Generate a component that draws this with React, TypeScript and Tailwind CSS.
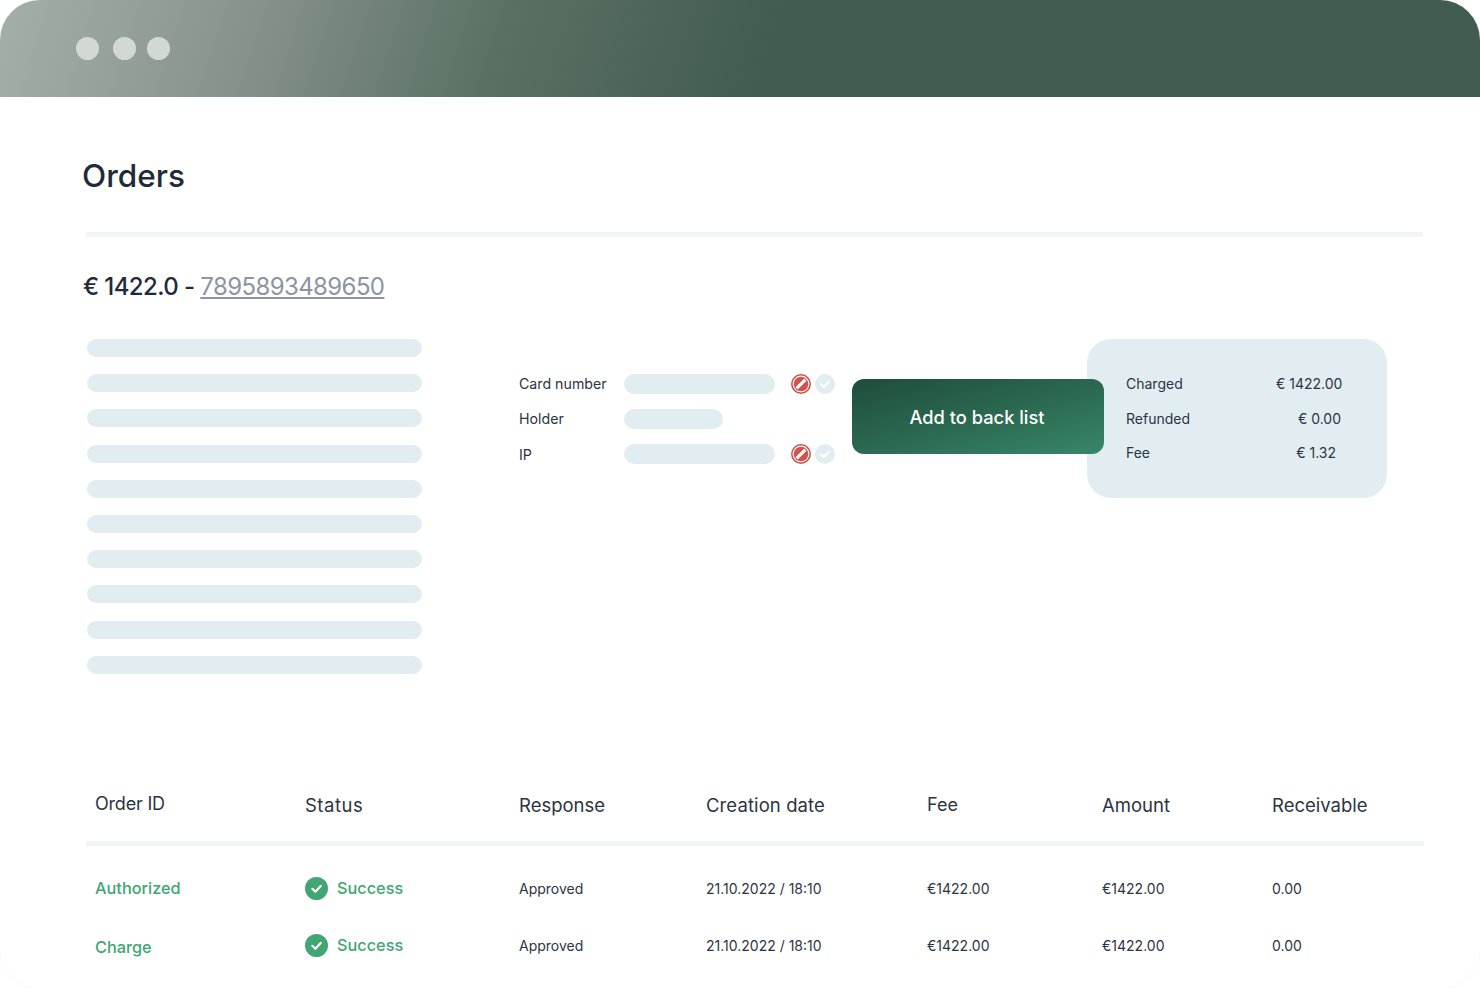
const font = "font-['Inter','Noto_Sans',sans-serif]"

const skeletonRows = [0, 1, 2, 3, 4, 5, 6, 7, 8, 9]

const totals: [string, string, string][] = [
  ['Charged', '€ 1422.00', 'pr-0'],
  ['Refunded', '€ 0.00', 'pr-0'],
  ['Fee', '€ 1.32', 'pr-[5px]'],
]

const orders = [
  { id: 'Authorized', offset: 'translate-y-0' },
  { id: 'Charge', offset: 'translate-y-[2px]' },
]

function BlockIcon() {
  return (
    <svg width="20" height="20" viewBox="0 0 20 20" fill="none">
      <circle cx="10" cy="10" r="9.2" fill="#fff" stroke="#cf4c46" strokeWidth="1.5" />
      <circle cx="10" cy="10" r="7.3" fill="#d0534c" />
      <path d="M5.6 14.4 14.4 5.6" stroke="#fff" strokeWidth="3.2" />
    </svg>
  )
}

function OkIcon() {
  return (
    <svg width="20" height="20" viewBox="0 0 20 20" fill="none">
      <circle cx="10" cy="10" r="10" fill="#e2edf2" />
      <path d="m6 10.4 2.7 2.6L14 7.6" stroke="#fff" strokeWidth="2" strokeLinecap="round" strokeLinejoin="round" />
    </svg>
  )
}

function SuccessIcon() {
  return (
    <svg width="23" height="23" viewBox="0 0 23 23" fill="none">
      <circle cx="11.5" cy="11.5" r="11.5" fill="#41a673" />
      <path d="m7.4 11.8 2.9 2.9 5.4-5.8" stroke="#fff" strokeWidth="2.2" strokeLinecap="round" strokeLinejoin="round" />
    </svg>
  )
}

function CheckRow({ label, bar, icons, labelClass }: { label: string; bar: string; icons?: boolean; labelClass?: string }) {
  return (
    <div className="flex h-5 items-center">
      <span className={`w-[105px] text-[14.2px] text-[#2b3442] ${labelClass ?? ''}`}>{label}</span>
      <div className={`h-5 rounded-full bg-[#e2edf2] ${bar}`} />
      {icons && (
        <div className="ml-4 flex gap-1">
          <BlockIcon />
          <OkIcon />
        </div>
      )}
    </div>
  )
}

export default function App() {
  return (
    <div className={`h-[988px] w-[1480px] overflow-hidden rounded-[40px] bg-white shadow-[0_0_0_1px_#fafafa] ${font}`}>
      <div className="flex h-[97px] items-center gap-[11px] bg-[linear-gradient(108deg,#a5afa9_0%,#849189_18%,#5b7063_34%,#425c50_52%,#425c50_100%)] pl-[76px]">
        <span className="size-[23px] rounded-full bg-[#d3d8d5]" />
        <span className="ml-[3px] size-[23px] rounded-full bg-[#d3d8d5]" />
        <span className="size-[23px] rounded-full bg-[#d3d8d5]" />
      </div>

      <div className="pl-[86px] pr-[57px]">
        <h1 className="-ml-[4px] mt-[59px] text-[31.5px] leading-[40px] font-[450] text-[#1f2a3a]">Orders</h1>
        <div className="mt-[36px] h-[5px] bg-[#f3f4f4]" />

        <p className="-ml-[3px] mt-[33px] text-[24px] leading-[34px] font-[550] tracking-[-0.6px] text-[#1f2a3a]">
          € 1422.0 - <span className="font-normal text-[#8b95a3] underline underline-offset-2">7895893489650</span>
        </p>

        <div className="mt-[35px] flex items-start">
          <div className="ml-px flex w-[335px] flex-col gap-[17.2px]">
            {skeletonRows.map((n) => (
              <div key={n} className="h-[18px] rounded-full bg-[#e2edf2]" />
            ))}
          </div>

          <div className="ml-[97px] mt-[35px] flex flex-col gap-[15px]">
            <CheckRow label="Card number" bar="w-[151px]" icons />
            <CheckRow label="Holder" bar="w-[99px]" />
            <CheckRow label="IP" bar="w-[151px]" icons labelClass="mt-[2px]" />
          </div>

          <button className="relative z-10 ml-[17px] mt-[40px] h-[75px] w-[252px] rounded-[12px] bg-[linear-gradient(165deg,#1f4d3b_0%,#2b6850_50%,#378768_100%)] pr-[2px] pt-[3px] text-[18.3px] font-medium text-white">
            Add to back list
          </button>

          <div className="-ml-[17px] flex h-[159px] w-[300px] flex-col gap-[14.5px] rounded-[24px] bg-[#e2edf2] pl-[39px] pt-[34.5px]">
            {totals.map(([label, value, pad]) => (
              <div key={label} className="flex h-5 items-center text-[14px] text-[#2b3442]">
                <span className="w-[150px]">{label}</span>
                <span className={`w-[65px] whitespace-nowrap text-right ${pad}`}>{value}</span>
              </div>
            ))}
          </div>
        </div>

        <div className="mt-[119.2px] grid grid-cols-[210px_214px_187px_221px_175px_170px_1fr] pl-[9px] text-[18.5px] leading-6 text-[#2b3442]">
          <span className="-mt-[1px] text-[18px] tracking-[-0.2px]">Order ID</span>
          <span className="tracking-[0.5px]">Status</span>
          <span>Response</span>
          <span className="tracking-[0.1px]">Creation date</span>
          <span className="text-[18px]">Fee</span>
          <span>Amount</span>
          <span>Receivable</span>
        </div>
        <div className="mr-[-1px] mt-[24px] h-[5px] bg-[#f3f4f4]" />

        <div className="mt-[30px] flex flex-col gap-[33px]">
          {orders.map((o) => (
            <div key={o.id} className="grid h-6 grid-cols-[210px_214px_187px_221px_175px_170px_1fr] items-center pl-[9px] text-[14px] text-[#2b3442]">
              <span className={`text-[16.3px] font-medium text-[#41a673] ${o.offset}`}>{o.id}</span>
              <span className="flex items-center gap-[9px] text-[16.3px] font-medium text-[#41a673]">
                <SuccessIcon />
                Success
              </span>
              <span>Approved</span>
              <span>21.10.2022 / 18:10</span>
              <span>€1422.00</span>
              <span>€1422.00</span>
              <span>0.00</span>
            </div>
          ))}
        </div>
      </div>
    </div>
  )
}
